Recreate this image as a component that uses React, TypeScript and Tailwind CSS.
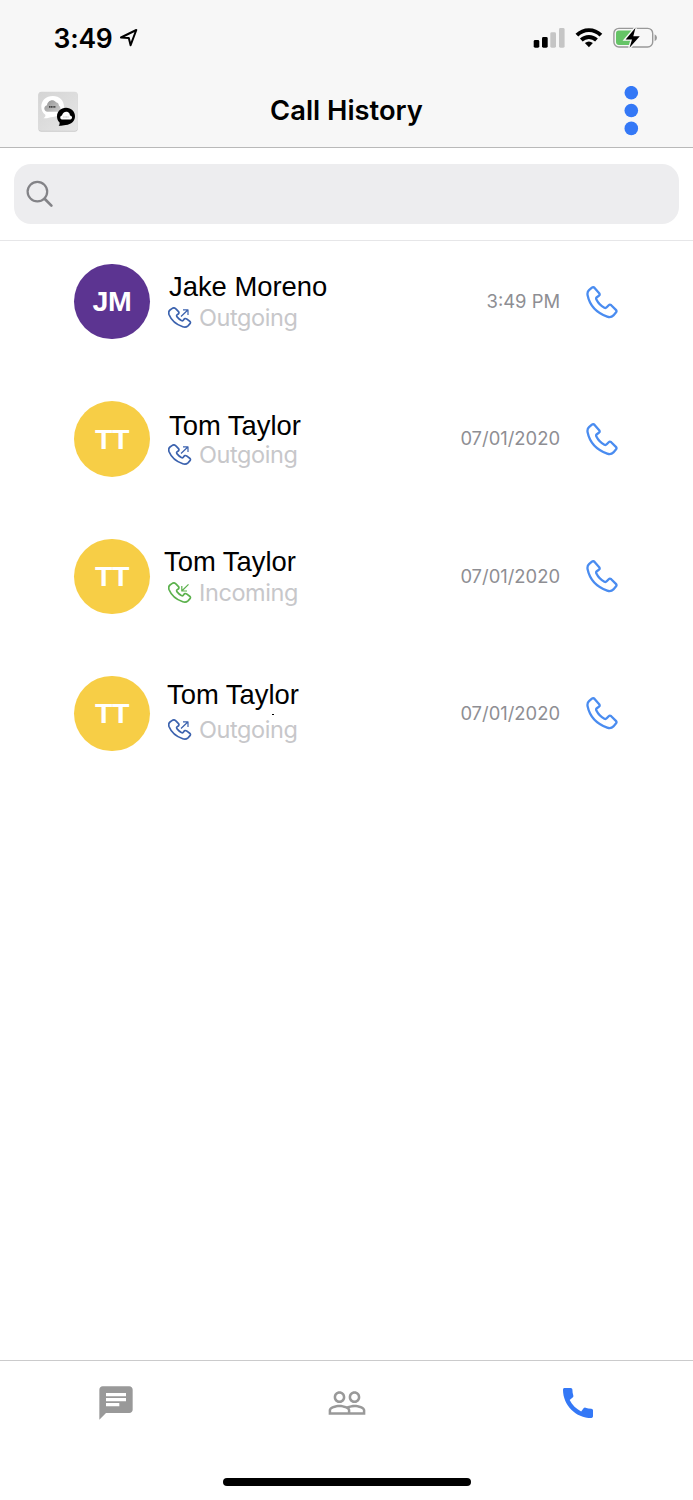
import React from "react";

type Call = {
  name: string;
  initials: string;
  avatar: string;
  direction: "Outgoing" | "Incoming";
  time: string;
  nameClass: string;
  speck?: boolean;
};

const calls: Call[] = [
  { name: "Jake Moreno", initials: "JM", avatar: "bg-[#5c3491]", direction: "Outgoing", time: "3:49 PM", nameClass: "pl-[5px] pt-[7.5px]" },
  { name: "Tom Taylor", initials: "TT", avatar: "bg-[#f7ce46]", direction: "Outgoing", time: "07/01/2020", nameClass: "pl-[5px] pt-[9.5px]" },
  { name: "Tom Taylor", initials: "TT", avatar: "bg-[#f7ce46]", direction: "Incoming", time: "07/01/2020", nameClass: "pl-0 pt-[8px]" },
  { name: "Tom Taylor", initials: "TT", avatar: "bg-[#f7ce46]", direction: "Outgoing", time: "07/01/2020", nameClass: "pl-[3px] pt-[4px]", speck: true },
];

const HANDSET =
  "M5.9 1.7Q7.3.6 8.6 1.9L13.2 7.2Q14.2 8.6 12.9 9.7L10.8 11.2Q9.7 12.2 10.4 13.6C12.2 17.3 14.9 20 18.4 21.8Q19.7 22.4 20.7 21.3L22.7 19.2Q23.9 18 25.2 19.2L29.9 23.9Q31.1 25.2 29.9 26.6L27.4 29.4Q25 31.9 21.2 30.6C10.8 26.8 3.6 18.9 1.6 9.2Q1 6 3 4.2Z";

function StatusBar() {
  return (
    <div className="flex h-[74px] items-start justify-between pl-[53.5px] pr-[35px] pt-[22px]">
      <div className="flex">
        <span className="w-[65px] text-[26.5px] leading-[32px] font-semibold tracking-[-0.2px]">3:49</span>
        <svg className="mt-[5px]" width="20" height="22" viewBox="0 0 20 22" fill="none" stroke="#000" strokeWidth="2" strokeLinejoin="round">
          <path d="M2 10.5L17.3 3L11.6 18.2L9.8 11Z" />
        </svg>
      </div>
      <div className="flex pt-[5px]">
        <svg width="32" height="22" viewBox="0 0 32 22">
          <rect x="0.7" y="13" width="5.6" height="7.7" rx="1.4" />
          <rect x="9" y="10" width="5.7" height="10.7" rx="1.4" />
          <rect x="17.3" y="5.3" width="5.7" height="15.4" rx="1.4" fill="#c5c5c5" />
          <rect x="26" y="1" width="5.6" height="19.7" rx="1.4" fill="#c5c5c5" />
        </svg>
        <svg className="ml-[10px]" width="28" height="22" viewBox="0 0 28 22" fill="none" stroke="#000" strokeWidth="3.9">
          <path d="M1.9 8.2C8.6 1.4 19.2 1.4 25.9 8.2" />
          <path d="M6.3 13C10.6 8.9 17.2 8.9 21.5 13" />
          <path d="M13.9 20.2L9.9 16.1Q13.9 12.7 17.9 16.1Z" fill="#000" stroke="none" />
        </svg>
        <svg className="ml-[10px]" width="45" height="22" viewBox="0 0 45 22">
          <rect x="0.9" y="1.4" width="38.8" height="18.6" rx="5" fill="none" stroke="#999" strokeWidth="1.4" />
          <rect x="3" y="3.6" width="17" height="14.3" rx="2.8" fill="#65c466" />
          <path d="M41.6 7.2Q44 8.5 44 10.7T41.6 14.2Z" fill="#999" />
          <path d="M22.5 .8L12.6 12.4H19L16.5 20.8L26.8 9.2H20.3Z" stroke="#f7f7f7" strokeWidth="2.8" />
          <path d="M22.5 .8L12.6 12.4H19L16.5 20.8L26.8 9.2H20.3Z" />
        </svg>
      </div>
    </div>
  );
}

function AppLogo() {
  return (
    <svg width="40" height="42" viewBox="0 0 40 42">
      <defs>
        <linearGradient id="tile" x1="0" y1="0" x2="1" y2="1">
          <stop offset="0" stopColor="#d4d4d4" />
          <stop offset="1" stopColor="#e6e6e6" />
        </linearGradient>
        <linearGradient id="cloud" x1="0" y1="0" x2="1" y2="1">
          <stop offset="0" stopColor="#929292" />
          <stop offset="1" stopColor="#cfcfcf" />
        </linearGradient>
      </defs>
      <rect x="0.4" y="1.5" width="39.3" height="39.3" rx="3" fill="#cacaca" />
      <rect x="0.4" y="0.8" width="39.3" height="39" rx="3" fill="url(#tile)" />
      <path d="M14.8 5C21.5 5 26 9.6 26 15.6S21.5 25.6 15 26C11.5 26.2 9.5 27.7 5.5 27.3Q7.8 26 7.5 24C4.6 22 3.3 19 3.3 15.6C3.3 9.6 8 5 14.8 5Z" fill="#fff" />
      <path d="M9 20.8C5.5 20 5.4 15.3 9 14.3C9.5 10 14.5 7.3 18 11.2C20.2 11.5 20.8 13.3 21 14.7C23.3 16 23 20 20 20.8Z" fill="url(#cloud)" />
      <path d="M11 15.9H17.5" stroke="#444" strokeWidth="1.8" strokeDasharray="1.3 .4" />
      <path d="M28 16.8C33.3 16.8 37 20.7 37 25.3S33.3 33.8 27.8 33.9C25.2 34 23.5 35 20.7 34.8Q22 33.5 21.6 31.5C19.8 30 19 27.8 19 25.3C19 20.7 22.7 16.8 28 16.8Z" />
      <path d="M24 28.5C21.7 28 21.7 25 24 24.5C24.7 20.7 29.5 19.3 31.6 22.8L32 24.5C34.7 24.9 34.7 28 32.3 28.5Z" fill="#fff" />
      <path d="M25.3 26H31" stroke="#bbb" strokeWidth="1.2" strokeDasharray="1 .4" />
    </svg>
  );
}

function DirectionIcon({ incoming }: { incoming: boolean }) {
  return (
    <svg width="24" height="22" viewBox="0 0 24 22" fill="none" stroke={incoming ? "#5bb14c" : "#3b62ae"} strokeWidth="1.7" strokeLinejoin="round">
      <path d="M3.9 1.6Q6.3 0 7.9 1.9L10.5 4.6Q11.6 6 9.9 7.2Q7.8 8.3 9.1 9.9Q11.2 12.5 13.4 13.6Q14.9 14.3 15.6 12.9Q16.8 10.8 18.6 11.9L21.7 14.2Q23.2 15.4 21.8 16.9L20 18.8Q17.8 20.9 14.8 19.8C8.1 17.4 3.2 12.9 1.1 7.7Q0 4.6 2 3Z" />
      <path d={incoming ? "M20.5 2.4L13.8 9M13.8 4V9H19" : "M13 9.5L19.8 3M15 2.9H20V7.9"} strokeWidth="1.2" />
    </svg>
  );
}

function CallRow({ call }: { call: Call }) {
  const incoming = call.direction === "Incoming";
  return (
    <li className="flex h-[137.25px] items-start pl-[74.3px] pr-[75px]">
      <div className={`flex h-[75.4px] w-[75.4px] shrink-0 items-center justify-center rounded-full font-['Liberation_Sans',sans-serif] text-[28.5px] font-bold tracking-[-0.3px] text-white ${call.avatar}`}>
        {call.initials}
      </div>
      <div className="relative ml-[14.3px] flex-1">
        <div className={`h-[43px] font-['Liberation_Sans',sans-serif] text-[27.4px] leading-[30px] whitespace-nowrap text-black ${call.nameClass}`}>
          {call.name}
        </div>
        <div className="flex pl-[4px]">
          <DirectionIcon incoming={incoming} />
          <span className="-mt-[5px] ml-[7px] text-[23.5px] leading-[32px] tracking-[-0.4px] text-[#c7c7ca]">{call.direction}</span>
        </div>
        {call.speck && <span className="absolute top-[38px] left-[108px] h-[1.5px] w-[2px] bg-black" />}
      </div>
      <div className="flex h-[76px] items-center">
        <span className="text-[18.4px] text-[#8e8e93]">{call.time}</span>
        <svg className="ml-[26px]" width="32" height="33" viewBox="0 0 32 33" fill="none" stroke="#4a8cf0" strokeWidth="2.3" strokeLinejoin="round">
          <path d={HANDSET} />
        </svg>
      </div>
    </li>
  );
}

function TabBar() {
  return (
    <nav className="grid h-[140px] grid-cols-3 content-start justify-items-center border-t border-[#cbcbcc] pt-[21.5px]">
      <svg width="40" height="40" viewBox="0 0 24 24" fill="#999">
        <path d="M20 2H4c-1.1 0-1.99.9-1.99 2L2 22l4-4h14c1.1 0 2-.9 2-2V4c0-1.1-.9-2-2-2zM6 9h12v2H6V9zm8 5H6v-2h8v2zm4-6H6V6h12v2z" />
      </svg>
      <svg width="40" height="40" viewBox="0 0 24 24" fill="#999">
        <path d="M16.5 13c-1.2 0-3.07.34-4.5 1-1.43-.67-3.3-1-4.5-1C5.33 13 1 14.08 1 16.25V19h22v-2.75c0-2.17-4.33-3.25-6.5-3.25zm-4 4.5h-10v-1.25c0-.54 2.56-1.75 5-1.75s5 1.21 5 1.75v1.25zm9 0H14v-1.25c0-.46-.2-.86-.52-1.22.88-.3 1.96-.53 3.02-.53 2.44 0 5 1.21 5 1.75v1.25zM7.5 12c1.93 0 3.5-1.57 3.5-3.5S9.43 5 7.5 5 4 6.57 4 8.5 5.57 12 7.5 12zm0-5.5c1.1 0 2 .9 2 2s-.9 2-2 2-2-.9-2-2 .9-2 2-2zm9 5.5c1.93 0 3.5-1.57 3.5-3.5S18.43 5 16.5 5 13 6.57 13 8.5s1.57 3.5 3.5 3.5zm0-5.5c1.1 0 2 .9 2 2s-.9 2-2 2-2-.9-2-2 .9-2 2-2z" />
      </svg>
      <svg width="40" height="40" viewBox="0 0 24 24" fill="#3478f6">
        <path d="M20.01 15.38c-1.23 0-2.42-.2-3.53-.56-.35-.12-.74-.03-1.01.24l-1.57 1.97c-2.83-1.35-5.48-3.9-6.89-6.83l1.95-1.66c.27-.28.35-.67.24-1.02-.37-1.11-.56-2.3-.56-3.53 0-.54-.45-.99-.99-.99H4.19C3.65 3 3 3.24 3 3.99 3 13.28 10.73 21 20.01 21c.71 0 .99-.63.99-1.18v-3.45c0-.54-.45-.99-.99-.99z" />
      </svg>
      <div className="col-span-3 mt-[55.5px] h-[8px] w-[248px] rounded-full bg-black" />
    </nav>
  );
}

export default function App() {
  return (
    <div className="flex h-[1500px] w-[693px] flex-col overflow-hidden bg-white font-['Inter',sans-serif] text-black">
      <header className="h-[148px] shrink-0 border-b border-[#b9b9b9] bg-[#f7f7f7]">
        <StatusBar />
        <div className="grid h-[73px] grid-cols-[1fr_auto_1fr] items-center pl-[54px] pr-[54px]">
          <div className="-ml-4 pt-[3px]">
            <AppLogo />
          </div>
          <h1 className="pt-[2px] text-[27.3px] font-semibold">Call History</h1>
          <svg className="justify-self-end" width="15" height="50" viewBox="0 0 15 50" fill="#3478f6">
            <circle cx="7.3" cy="6.7" r="6.8" />
            <circle cx="7.3" cy="24.5" r="6.8" />
            <circle cx="7.3" cy="42.4" r="6.8" />
          </svg>
        </div>
      </header>
      <div className="h-[93px] shrink-0 border-b border-[#e6e6e8] px-[14px] pt-[16px]">
        <div className="flex h-[60px] items-center rounded-[17px] bg-[#ededef] pl-[12px]">
          <svg width="28" height="28" viewBox="0 0 28 28" fill="none" stroke="#838387" strokeWidth="2.2" strokeLinecap="round">
            <circle cx="11.4" cy="11.6" r="9.8" />
            <path d="M18.6 18.8L25.4 25.6" strokeWidth="2.7" />
          </svg>
        </div>
      </div>
      <ul className="flex-1 pt-[23px]">
        {calls.map((call, i) => (
          <CallRow key={i} call={call} />
        ))}
      </ul>
      <TabBar />
    </div>
  );
}
